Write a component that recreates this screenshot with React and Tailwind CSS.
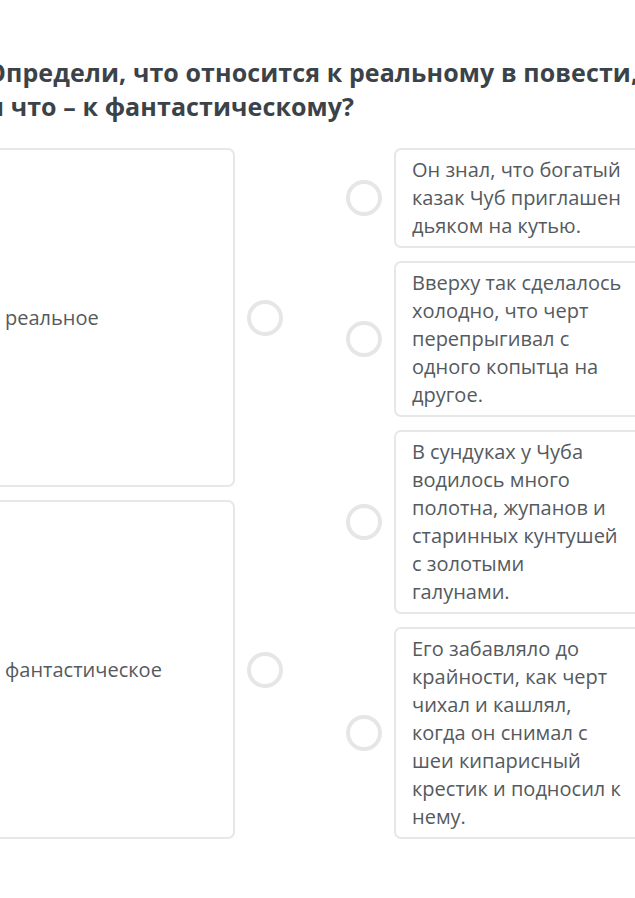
const leftItems = ["реальное", "фантастическое"];

const rightItems = [
  "Он знал, что богатый казак Чуб приглашен дьяком на кутью.",
  "Вверху так сделалось холодно, что черт перепрыгивал с одного копытца на другое.",
  "В сундуках у Чуба водилось много полотна, жупанов и старинных кунтушей с золотыми галунами.",
  "Его забавляло до крайности, как черт чихал и кашлял, когда он снимал с шеи кипарисный крестик и подносил к нему.",
];

const Dot = () => (
  <div className="w-[36px] h-[36px] shrink-0 rounded-full border-[4px] border-[#e4e6e8] bg-white" />
);

export default function App() {
  return (
    <div
      className="w-[635px] h-[898px] overflow-hidden bg-white"
      style={{ fontFamily: '"Open Sans", "Noto Sans", sans-serif' }}
    >
      <div className="ml-[-14px] pt-[55px]">
        <h1 className="text-[25px] leading-[34px] font-bold text-[#3b4248] whitespace-nowrap tracking-[0.1px]">
          Определи, что относится к реальному в повести,
          <br />и что – к фантастическому?
        </h1>

        <div className="mt-[25px] flex">
          <div className="w-[297px] flex flex-col gap-[13px]">
            {leftItems.map((t) => (
              <div key={t} className="flex-1 flex items-center">
                <div className="w-[249px] self-stretch flex items-center pl-[17px] border-2 border-[#e6e7e8] rounded-[7px] text-[20px] text-[#555a5e]">
                  {t}
                </div>
                <div className="ml-[12px]">
                  <Dot />
                </div>
              </div>
            ))}
          </div>

          <div className="ml-[63px] flex flex-col gap-[13px]">
            {rightItems.map((t, i) => (
              <div key={i} className="flex items-center gap-[12px]">
                <Dot />
                <div className="w-[270px] border-2 border-[#e6e7e8] rounded-[7px] pl-[16px] py-[6px] text-[20px] leading-[28px] text-[#555a5e]">
                  <div className="w-[214px]">{t}</div>
                </div>
              </div>
            ))}
          </div>
        </div>
      </div>
    </div>
  );
}
